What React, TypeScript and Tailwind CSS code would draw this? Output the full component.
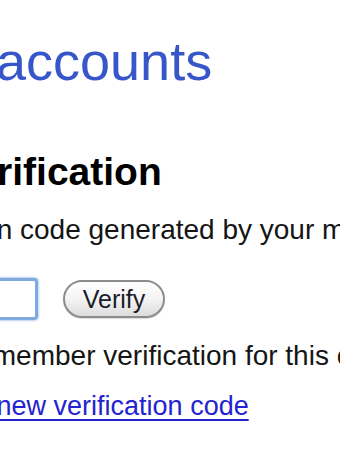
export default function App() {
  return (
    <div className="w-[340px] h-[460px] overflow-hidden bg-white font-['Liberation_Sans',Arial,sans-serif] text-[#1a1a1a]">
      <div className="flex flex-col whitespace-nowrap">
        <h1 className="mt-[34px] ml-[-4px] text-[54px] leading-[54px] font-normal text-[#3656c9]">
          accounts
        </h1>

        <h2 className="mt-[64px] ml-[-172px] text-[39px] leading-[39px] font-bold text-black">
          2-step verification
        </h2>

        <p className="mt-[25px] ml-[-243px] text-[28px] leading-[28px] text-[#151515]">
          Enter the verification code generated by your mobile application.
        </p>

        <div className="mt-[34px] flex items-center h-[42px]">
          <input
            type="text"
            className="ml-[-62px] w-[100px] h-[42px] rounded-[4px] border-[3px] border-[#7eaae0] bg-white shadow-[0_0_2px_1px_#b9d2f1] outline-none"
          />
          <button className="ml-[25px] w-[102px] h-[38px] rounded-full border-2 border-[#8c8c8c] bg-gradient-to-b from-white via-[#f4f4f4] to-[#dcdcdc] shadow-[0_1px_1px_rgba(0,0,0,0.15)] text-[25px] leading-none text-[#1c1c2a] font-['Liberation_Sans',Arial,sans-serif]">
            Verify
          </button>
        </div>

        <label className="mt-[22px] ml-[-43px] flex items-center text-[28px] leading-[28px] text-[#151515]">
          <span>Remember verification for this computer for 30 days.</span>
        </label>

        <a
          href="#"
          className="mt-[23px] ml-[-77px] text-[27px] leading-[27px] text-[#2323cf] underline decoration-2 underline-offset-[4px]"
        >
          Get a new verification code
        </a>
      </div>
    </div>
  );
}
